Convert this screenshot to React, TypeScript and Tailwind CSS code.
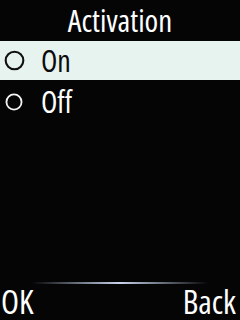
const Radio = ({ dark, size }: { dark: boolean; size: number }) => (
  <svg width={size} height={size} viewBox="0 0 20 20">
    <circle cx="10" cy="10" r="8.4" fill="none" stroke={dark ? "#111" : "#f4f4f4"} strokeWidth="2" />
  </svg>
);

export default function App() {
  const items = ["On", "Off"];
  const selected = 0;

  return (
    <div className="w-[240px] h-[320px] bg-[#050505] flex flex-col text-white overflow-hidden font-['Open_Sans',sans-serif] font-medium [font-stretch:80%]">
      <div className="h-[41px] text-center text-[31px] leading-[41px]">Activation</div>
      <ul className="flex flex-col">
        {items.map((label, i) => (
          <li
            key={label}
            className={`h-[39px] flex items-center ${i === selected ? "bg-[#e6f3ee] text-[#0c0c0c]" : "text-white pt-[4px]"}`}
          >
            <div className="w-[28px] flex items-center justify-center">
              <Radio dark={i === selected} size={i === selected ? 21 : 18} />
            </div>
            <span className="ml-[13px] text-[30px] leading-[39px]">{label}</span>
          </li>
        ))}
      </ul>
      <div className="flex-1" />
      <div className="h-[2px] mx-[32px] bg-gradient-to-r from-transparent via-[#c8d4ec] to-transparent" />
      <div className="h-[36px] flex items-start justify-between pl-[1px] pr-[4px] text-[33px] leading-[36px]">
        <span>OK</span>
        <span>Back</span>
      </div>
    </div>
  );
}
